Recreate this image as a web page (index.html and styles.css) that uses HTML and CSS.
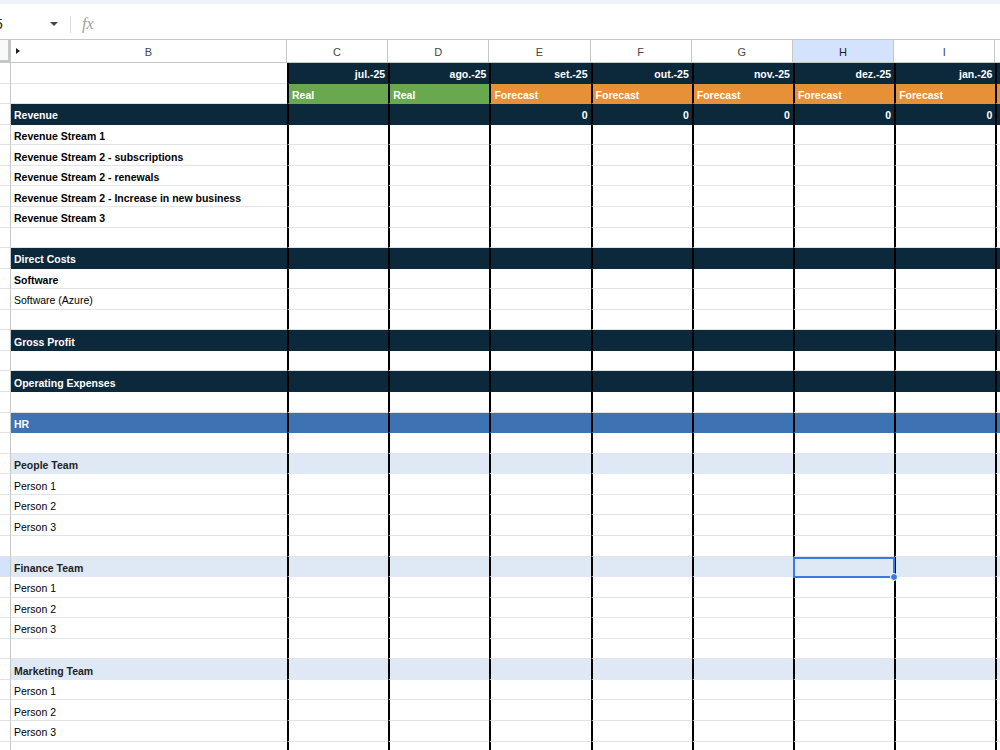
FILE: index.html
```html
<!DOCTYPE html>
<html>
<head>
<meta charset="utf-8">
<link rel="stylesheet" href="styles.css">
</head>
<body>
<div class="topstrip"></div>
<div class="fbar">
  <div class="namebox"><span class="ref">5</span><span class="caret"></span></div>
  <div class="sep"></div>
  <div class="fx">fx</div>
</div>
<div class="sheet">
  <div class="colhead">
    <div class="corner"></div>
    <div class="hb"><span class="tri"></span>B</div>
    <div class="hc">C</div><div class="hc">D</div><div class="hc">E</div><div class="hc">F</div>
    <div class="hc">G</div><div class="hc hsel">H</div><div class="hc">I</div><div class="hc">J</div>
  </div>

  <div class="row date"><div class="rh"></div><div class="b"></div>
    <div class="c">jul.-25</div><div class="c">ago.-25</div><div class="c">set.-25</div><div class="c">out.-25</div><div class="c">nov.-25</div><div class="c">dez.-25</div><div class="c">jan.-26</div><div class="c">fev.-26</div></div>
  <div class="row type"><div class="rh"></div><div class="b"></div>
    <div class="c real">Real</div><div class="c real">Real</div><div class="c fc">Forecast</div><div class="c fc">Forecast</div><div class="c fc">Forecast</div><div class="c fc">Forecast</div><div class="c fc">Forecast</div><div class="c fc">Forecast</div></div>
  <div class="row navy"><div class="rh"></div><div class="b">Revenue</div>
    <div class="c"></div><div class="c"></div><div class="c num">0</div><div class="c num">0</div><div class="c num">0</div><div class="c num">0</div><div class="c num">0</div><div class="c num">0</div></div>
  <div class="row bold"><div class="rh"></div><div class="b">Revenue Stream 1</div>
    <div class="c"></div><div class="c"></div><div class="c"></div><div class="c"></div><div class="c"></div><div class="c"></div><div class="c"></div><div class="c"></div></div>
  <div class="row bold"><div class="rh"></div><div class="b">Revenue Stream 2 - subscriptions</div>
    <div class="c"></div><div class="c"></div><div class="c"></div><div class="c"></div><div class="c"></div><div class="c"></div><div class="c"></div><div class="c"></div></div>
  <div class="row bold"><div class="rh"></div><div class="b">Revenue Stream 2 - renewals</div>
    <div class="c"></div><div class="c"></div><div class="c"></div><div class="c"></div><div class="c"></div><div class="c"></div><div class="c"></div><div class="c"></div></div>
  <div class="row bold"><div class="rh"></div><div class="b">Revenue Stream 2 - Increase in new business</div>
    <div class="c"></div><div class="c"></div><div class="c"></div><div class="c"></div><div class="c"></div><div class="c"></div><div class="c"></div><div class="c"></div></div>
  <div class="row bold"><div class="rh"></div><div class="b">Revenue Stream 3</div>
    <div class="c"></div><div class="c"></div><div class="c"></div><div class="c"></div><div class="c"></div><div class="c"></div><div class="c"></div><div class="c"></div></div>
  <div class="row"><div class="rh"></div><div class="b"></div>
    <div class="c"></div><div class="c"></div><div class="c"></div><div class="c"></div><div class="c"></div><div class="c"></div><div class="c"></div><div class="c"></div></div>
  <div class="row navy"><div class="rh"></div><div class="b">Direct Costs</div>
    <div class="c"></div><div class="c"></div><div class="c"></div><div class="c"></div><div class="c"></div><div class="c"></div><div class="c"></div><div class="c"></div></div>
  <div class="row bold"><div class="rh"></div><div class="b">Software</div>
    <div class="c"></div><div class="c"></div><div class="c"></div><div class="c"></div><div class="c"></div><div class="c"></div><div class="c"></div><div class="c"></div></div>
  <div class="row"><div class="rh"></div><div class="b">Software (Azure)</div>
    <div class="c"></div><div class="c"></div><div class="c"></div><div class="c"></div><div class="c"></div><div class="c"></div><div class="c"></div><div class="c"></div></div>
  <div class="row"><div class="rh"></div><div class="b"></div>
    <div class="c"></div><div class="c"></div><div class="c"></div><div class="c"></div><div class="c"></div><div class="c"></div><div class="c"></div><div class="c"></div></div>
  <div class="row navy"><div class="rh"></div><div class="b">Gross Profit</div>
    <div class="c"></div><div class="c"></div><div class="c"></div><div class="c"></div><div class="c"></div><div class="c"></div><div class="c"></div><div class="c"></div></div>
  <div class="row"><div class="rh"></div><div class="b"></div>
    <div class="c"></div><div class="c"></div><div class="c"></div><div class="c"></div><div class="c"></div><div class="c"></div><div class="c"></div><div class="c"></div></div>
  <div class="row navy"><div class="rh"></div><div class="b">Operating Expenses</div>
    <div class="c"></div><div class="c"></div><div class="c"></div><div class="c"></div><div class="c"></div><div class="c"></div><div class="c"></div><div class="c"></div></div>
  <div class="row"><div class="rh"></div><div class="b"></div>
    <div class="c"></div><div class="c"></div><div class="c"></div><div class="c"></div><div class="c"></div><div class="c"></div><div class="c"></div><div class="c"></div></div>
  <div class="row hr"><div class="rh"></div><div class="b">HR</div>
    <div class="c"></div><div class="c"></div><div class="c"></div><div class="c"></div><div class="c"></div><div class="c"></div><div class="c"></div><div class="c"></div></div>
  <div class="row"><div class="rh"></div><div class="b"></div>
    <div class="c"></div><div class="c"></div><div class="c"></div><div class="c"></div><div class="c"></div><div class="c"></div><div class="c"></div><div class="c"></div></div>
  <div class="row team"><div class="rh"></div><div class="b">People Team</div>
    <div class="c"></div><div class="c"></div><div class="c"></div><div class="c"></div><div class="c"></div><div class="c"></div><div class="c"></div><div class="c"></div></div>
  <div class="row"><div class="rh"></div><div class="b">Person 1</div>
    <div class="c"></div><div class="c"></div><div class="c"></div><div class="c"></div><div class="c"></div><div class="c"></div><div class="c"></div><div class="c"></div></div>
  <div class="row"><div class="rh"></div><div class="b">Person 2</div>
    <div class="c"></div><div class="c"></div><div class="c"></div><div class="c"></div><div class="c"></div><div class="c"></div><div class="c"></div><div class="c"></div></div>
  <div class="row"><div class="rh"></div><div class="b">Person 3</div>
    <div class="c"></div><div class="c"></div><div class="c"></div><div class="c"></div><div class="c"></div><div class="c"></div><div class="c"></div><div class="c"></div></div>
  <div class="row"><div class="rh"></div><div class="b"></div>
    <div class="c"></div><div class="c"></div><div class="c"></div><div class="c"></div><div class="c"></div><div class="c"></div><div class="c"></div><div class="c"></div></div>
  <div class="row team selrow"><div class="rh"></div><div class="b">Finance Team</div>
    <div class="c"></div><div class="c"></div><div class="c"></div><div class="c"></div><div class="c"></div><div class="c"></div><div class="c"></div><div class="c"></div></div>
  <div class="row"><div class="rh"></div><div class="b">Person 1</div>
    <div class="c"></div><div class="c"></div><div class="c"></div><div class="c"></div><div class="c"></div><div class="c"></div><div class="c"></div><div class="c"></div></div>
  <div class="row"><div class="rh"></div><div class="b">Person 2</div>
    <div class="c"></div><div class="c"></div><div class="c"></div><div class="c"></div><div class="c"></div><div class="c"></div><div class="c"></div><div class="c"></div></div>
  <div class="row"><div class="rh"></div><div class="b">Person 3</div>
    <div class="c"></div><div class="c"></div><div class="c"></div><div class="c"></div><div class="c"></div><div class="c"></div><div class="c"></div><div class="c"></div></div>
  <div class="row"><div class="rh"></div><div class="b"></div>
    <div class="c"></div><div class="c"></div><div class="c"></div><div class="c"></div><div class="c"></div><div class="c"></div><div class="c"></div><div class="c"></div></div>
  <div class="row team"><div class="rh"></div><div class="b">Marketing Team</div>
    <div class="c"></div><div class="c"></div><div class="c"></div><div class="c"></div><div class="c"></div><div class="c"></div><div class="c"></div><div class="c"></div></div>
  <div class="row"><div class="rh"></div><div class="b">Person 1</div>
    <div class="c"></div><div class="c"></div><div class="c"></div><div class="c"></div><div class="c"></div><div class="c"></div><div class="c"></div><div class="c"></div></div>
  <div class="row"><div class="rh"></div><div class="b">Person 2</div>
    <div class="c"></div><div class="c"></div><div class="c"></div><div class="c"></div><div class="c"></div><div class="c"></div><div class="c"></div><div class="c"></div></div>
  <div class="row"><div class="rh"></div><div class="b">Person 3</div>
    <div class="c"></div><div class="c"></div><div class="c"></div><div class="c"></div><div class="c"></div><div class="c"></div><div class="c"></div><div class="c"></div></div>
  <div class="row"><div class="rh"></div><div class="b"></div>
    <div class="c"></div><div class="c"></div><div class="c"></div><div class="c"></div><div class="c"></div><div class="c"></div><div class="c"></div><div class="c"></div></div>

  <div class="selection"><span class="handle"></span></div>
</div>
</body>
</html>
```
FILE: styles.css
```css
* { box-sizing: border-box; }
html, body { margin: 0; padding: 0; }
body {
  width: 1000px;
  height: 750px;
  overflow: hidden;
  background: #ffffff;
  font-family: "Liberation Sans", Arial, sans-serif;
  color: #1f1f1f;
}
.topstrip { height: 4px; background: #eef2f9; }
.fbar {
  height: 36px;
  display: flex;
  align-items: center;
  padding-top: 5px;
  border-bottom: 1px solid #c7c7c7;
  background: #fff;
}
.namebox {
  width: 70px;
  display: flex;
  align-items: center;
  justify-content: space-between;
  padding-right: 12px;
  font-size: 14px;
  color: #1f1f1f;
}
.ref { margin-left: -5px; }
.caret {
  width: 0; height: 0;
  border-left: 4px solid transparent;
  border-right: 4px solid transparent;
  border-top: 4px solid #444746;
}
.sep { width: 1px; height: 17px; background: #dadce0; }
.fx {
  margin-left: 11px;
  font-family: "Liberation Serif", serif;
  font-style: italic;
  font-size: 16px;
  color: #9aa0a6;
}
.sheet { position: relative; }
.colhead {
  display: flex;
  height: 23px;
  font-size: 11px;
  color: #444746;
  border-bottom: 1px solid #c4c7c5;
}
.corner {
  width: 11px;
  flex: none;
  background: #f8f9fa;
  border-right: 3px solid #c4c7c5;
  border-bottom: 2px solid #c4c7c5;
}
.hb, .hc {
  flex: none;
  display: flex;
  align-items: center;
  justify-content: center;
  padding-top: 1px;
  border-right: 1px solid #c4c7c5;
}
.hb { width: 276px; position: relative; }
.hc { width: 101.2px; }
.hsel { background: #d3e3fd; color: #0b1f3a; }
.tri {
  position: absolute;
  left: 5px;
  top: 8px;
  width: 0; height: 0;
  border-top: 3px solid transparent;
  border-bottom: 3px solid transparent;
  border-left: 4px solid #1f1f1f;
}
.row {
  display: flex;
  height: 20.57px;
  font-size: 10.5px;
  color: #000;
}
.rh {
  width: 11px;
  flex: none;
  border-right: 1px solid #c4c7c5;
  border-bottom: 1px solid #e1e3e1;
  background: #fff;
}
.b, .c {
  flex: none;
  display: flex;
  align-items: center;
  padding-top: 3px;
  border-bottom: 1px solid #e2e3e3;
  white-space: nowrap;
  overflow: hidden;
}
.b { width: 276px; padding-left: 3px; }
.c {
  width: 101.2px;
  border-left: 2px solid #000;
  justify-content: flex-end;
  padding-right: 3px;
}
.bold .b { font-weight: bold; }

.date .c {
  background: #0c293c; color: #fff; font-weight: bold;
  border-bottom-color: #0c293c;
}
.type .c {
  color: #fff; font-weight: bold;
  justify-content: flex-start;
  padding-left: 3px;
}
.type .real { background: #6aa84f; border-bottom-color: #6aa84f; }
.type .fc { background: #e69138; border-bottom-color: #e69138; }

.navy .b, .navy .c {
  background: #0c293c; color: #fff; font-weight: bold;
  border-bottom-color: #0c293c;
}
.hr .b, .hr .c {
  background: #3d72b3; color: #fff; font-weight: bold;
  border-bottom-color: #3d72b3;
}
.team .b, .team .c {
  background: #dfe8f5; font-weight: bold; color: #1f1f1f;
  border-bottom-color: #dfe8f5;
}
.selrow .rh { background: #d3e3fd; }

.selection {
  position: absolute;
  left: 793px;
  top: 516.7px;
  width: 102px;
  height: 21.5px;
  border: 2px solid #3b78e7;
  pointer-events: none;
}
.handle {
  position: absolute;
  right: -5px;
  bottom: -5px;
  width: 8px;
  height: 8px;
  border-radius: 50%;
  background: #3b78e7;
  border: 1px solid #fff;
}
```
